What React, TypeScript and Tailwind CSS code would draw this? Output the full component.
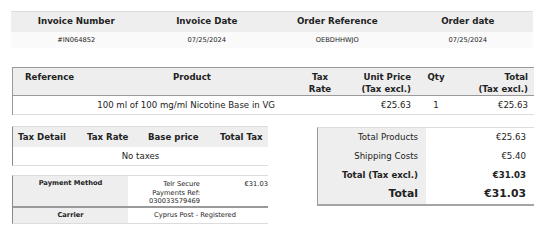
import React from 'react';

const summary = [
    { label: 'Invoice Number', value: '#IN064852' },
    { label: 'Invoice Date', value: '07/25/2024' },
    { label: 'Order Reference', value: 'OEBDHHWJO' },
    { label: 'Order date', value: '07/25/2024' },
];

const totals = [
    { label: 'Total Products', value: '€25.63', bold: false },
    { label: 'Shipping Costs', value: '€5.40', bold: false },
    { label: 'Total (Tax excl.)', value: '€31.03', bold: true },
];

export default function App() {
    return (
        <div className="w-[552px] h-[250px] bg-white px-3 pt-[11px] font-['DejaVu_Sans',sans-serif] text-[#222]">
            {/* Invoice summary */}
            <div className="w-[522px] -ml-px border-t border-[#dcdcdc]">
                <div className="grid grid-cols-4 h-[20px] bg-[#eeeeee] items-center text-center text-[8.7px] font-bold">
                    {summary.map((s) => (
                        <div key={s.label}>{s.label}</div>
                    ))}
                </div>
                <div className="grid grid-cols-4 h-[16px] bg-[#fafafa] items-center text-center text-[6.7px]">
                    {summary.map((s) => (
                        <div key={s.label}>{s.value}</div>
                    ))}
                </div>
            </div>

            {/* Products */}
            <div className="mt-[19px] w-[522px] border-t border-l border-[#9a9a9a] text-[8.6px]">
                <div className="grid grid-cols-[76px_206px_50px_74px_34px_81px] h-[28px] bg-[#eeeeee] border-b border-[#9a9a9a] font-bold leading-[12px] pt-[3px]">
                    <div className="pl-[12px]">Reference</div>
                    <div className="text-center">Product</div>
                    <div className="text-center">Tax<br />Rate</div>
                    <div className="text-right pr-[8px]">Unit Price<br />(Tax excl.)</div>
                    <div className="text-center">Qty</div>
                    <div className="text-right pr-[6px]">Total<br />(Tax excl.)</div>
                </div>
                <div className="grid grid-cols-[76px_206px_50px_74px_34px_81px] h-[19px] items-center border-b border-[#dcdcdc] bg-white">
                    <div></div>
                    <div className="text-right pr-[20px]">100 ml of 100 mg/ml Nicotine Base in VG</div>
                    <div></div>
                    <div className="text-right pr-[8px]">€25.63</div>
                    <div className="text-center">1</div>
                    <div className="text-right pr-[6px]">€25.63</div>
                </div>
            </div>

            <div className="mt-[11px] w-[522px] flex items-start">
                {/* Left column */}
                <div className="w-[256px] flex flex-col gap-[9px]">
                    <div className="border-t border-l border-[#dcdcdc] border-l-[#8a8a8a] border-b-[#dcdcdc] border-b text-[8.6px]">
                        <div className="grid grid-cols-[69px_61px_72px_1fr] h-[20px] bg-[#eeeeee] items-center font-bold">
                            <div className="pl-[5px]">Tax Detail</div>
                            <div className="pl-[5px]">Tax Rate</div>
                            <div className="pl-[5px]">Base price</div>
                            <div className="pl-[5px]">Total Tax</div>
                        </div>
                        <div className="h-[18px] flex items-center justify-center bg-white">No taxes</div>
                    </div>

                    <div className="border-t border-l border-b border-[#dcdcdc] border-l-[#8a8a8a] text-[6.7px] leading-[8.5px]">
                        <div className="flex h-[32px] border-b-2 border-[#9a9a9a]">
                            <div className="w-[115px] bg-[#eeeeee] text-center font-bold pt-[3px]">Payment Method</div>
                            <div className="flex-1 flex pt-[4px]">
                                <div className="w-[72px] text-right">Telr Secure<br />Payments Ref:<br />030033579469</div>
                                <div className="flex-1 text-right">€31.03</div>
                            </div>
                        </div>
                        <div className="flex h-[15px] items-stretch">
                            <div className="w-[115px] bg-[#eeeeee] flex items-center justify-center font-bold">Carrier</div>
                            <div className="flex-1 flex items-center justify-center pr-[6px]">Cyprus Post - Registered</div>
                        </div>
                    </div>
                </div>

                {/* Totals */}
                <div className="ml-auto mt-px w-[217px] border-t border-l border-b-2 border-[#dcdcdc] border-l-[#9a9a9a] border-b-[#a5a5a5] text-[8.6px]">
                    {totals.map((t) => (
                        <div key={t.label} className={`flex h-[19px] ${t.bold ? 'font-bold' : ''}`}>
                            <div className="w-[108px] bg-[#eeeeee] flex items-center justify-end pr-[8px]">{t.label}</div>
                            <div className="flex-1 flex items-center justify-end pr-[8px]">{t.value}</div>
                        </div>
                    ))}
                    <div className="flex h-[19px] font-bold text-[10.8px]">
                        <div className="w-[108px] bg-[#eeeeee] flex items-center justify-end pr-[8px]">Total</div>
                        <div className="flex-1 flex items-center justify-end pr-[8px]">€31.03</div>
                    </div>
                </div>
            </div>
        </div>
    );
}
